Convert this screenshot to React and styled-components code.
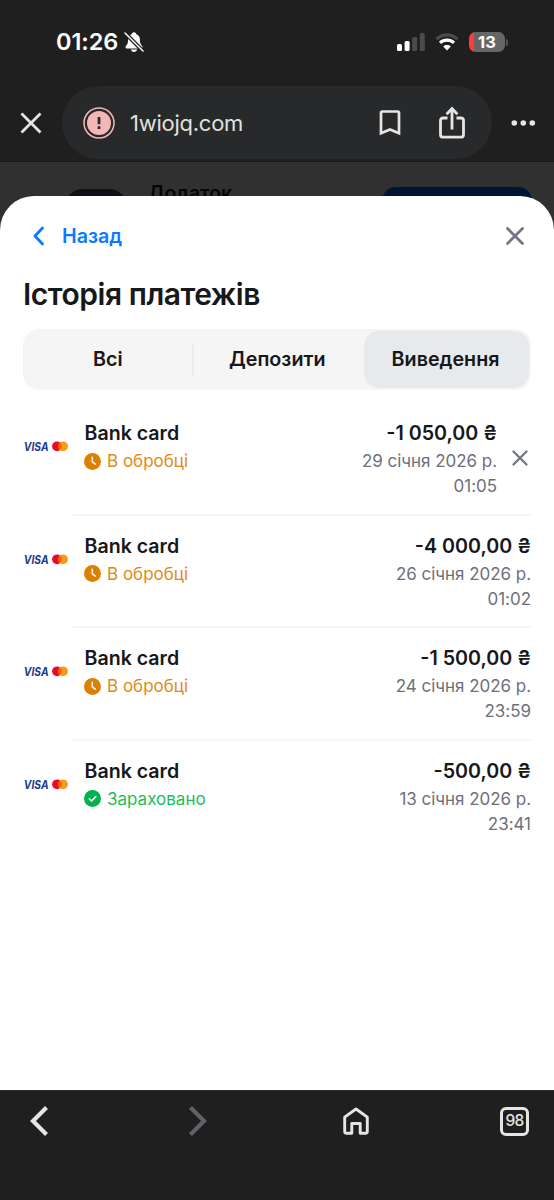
import React from "react";
import styled, { createGlobalStyle } from "styled-components";

const GlobalStyle = createGlobalStyle`
  * { box-sizing: border-box; }
  body { margin: 0; background: #1f1f1f; font-family: Inter, "Liberation Sans", sans-serif; }
  button { border: 0; padding: 0; margin: 0; background: none; font: inherit; color: inherit; }
  svg { display: block; flex: none; }
`;

const Phone = styled.div`
  width: 554px;
  height: 1200px;
  display: flex;
  flex-direction: column;
  background: #1f1f1f;
  overflow: hidden;
`;

const StatusBar = styled.header`
  height: 84px;
  padding: 0 46px 0 56px;
  display: flex;
  align-items: center;
  justify-content: space-between;
`;

const StatusSide = styled.div`
  display: flex;
  align-items: center;
  gap: ${(p) => p.$gap}px;
`;

const Clock = styled.span`
  width: 64px;
  font-size: 23.5px;
  line-height: 28px;
  font-weight: 600;
  letter-spacing: -0.1px;
  white-space: nowrap;
  color: #fff;
`;

const Battery = styled.div`
  display: flex;
  align-items: center;
  gap: 1px;
`;

const BatteryBody = styled.div`
  width: 36px;
  height: 20px;
  border-radius: 6.5px;
  background: linear-gradient(90deg, #ff3b3f 5px, #666 5px);
  color: #fff;
  font-size: 16.5px;
  line-height: 20px;
  font-weight: 700;
  text-align: center;
`;

const BatteryTip = styled.div`
  width: 2px;
  height: 7px;
  border-radius: 0 2px 2px 0;
  background: #555;
`;

const Toolbar = styled.div`
  height: 78px;
  padding: 2px 18px 2px 20px;
  display: flex;
  align-items: center;
  border-bottom: 1px solid #191919;
`;

const AddressBar = styled.div`
  width: 430px;
  height: 73px;
  margin: 0 19px 0 20px;
  padding: 0 27px 0 21px;
  border-radius: 37px;
  background: #28292a;
  display: flex;
  align-items: center;
`;

const Url = styled.span`
  flex: 1;
  margin-left: 15px;
  font-size: 22px;
  letter-spacing: -0.25px;
  line-height: 28px;
  color: #e0e1df;
`;

const ActionGroup = styled.div`
  display: flex;
  align-items: center;
  gap: 38px;
`;

const Viewport = styled.main`
  height: 928px;
  display: flex;
  flex-direction: column;
  background: #303030;
  overflow: hidden;
`;

const PagePeek = styled.div`
  height: 34px;
  padding: 0 22px 0 65px;
  display: flex;
  align-items: flex-start;
`;

const PeekIcon = styled.div`
  width: 62px;
  height: 60px;
  flex: none;
  margin-top: 27px;
  border-radius: 18px;
  background: #0d1018;
`;

const PeekTitle = styled.span`
  flex: 1;
  margin: 19px 0 0 21px;
  font-size: 19.5px;
  line-height: 24px;
  font-weight: 600;
  letter-spacing: -0.1px;
  color: #050505;
`;

const PeekButton = styled.div`
  width: 150px;
  height: 50px;
  margin-top: 25px;
  border-radius: 14px;
  background: #001533;
`;

const Sheet = styled.section`
  flex: 1;
  z-index: 1;
  padding: 22px 23px 0;
  border-radius: 34px 34px 0 0;
  background: #fff;
  color: #17181a;
`;

const SheetHeader = styled.div`
  height: 35px;
  padding: 0 7.5px 0 9px;
  display: flex;
  align-items: center;
  justify-content: space-between;
`;

const BackButton = styled.button`
  display: flex;
  align-items: center;
  gap: 16px;
  color: #0a7aff;
  font-size: 19.7px;
  line-height: 24px;
  font-weight: 600;
`;

const Title = styled.h1`
  margin: 21px 0 0;
  height: 40px;
  font-size: 30px;
  line-height: 40px;
  font-weight: 600;
  letter-spacing: -0.47px;
  white-space: nowrap;
`;

const Tabs = styled.div`
  height: 61px;
  margin-top: 15px;
  padding: 2px;
  display: flex;
  align-items: center;
  border-radius: 16px;
  background: #f5f5f5;
`;

const Tab = styled.button`
  flex: ${(p) => (p.$active ? "0 0 165px" : "1")};
  height: 57px;
  padding: 0 2px 1px 0;
  border-radius: 15px;
  font-size: 19.7px;
  font-weight: 600;
  background: ${(p) => (p.$active ? "#e8e9eb" : "transparent")};
`;

const TabDivider = styled.div`
  width: 2px;
  height: 34px;
  margin-left: -1px;
  margin-right: 1px;
  background: ${(p) => (p.$hidden ? "transparent" : "#ebecee")};
`;

const List = styled.ul`
  margin: 13px 0 0;
  padding: 0;
  list-style: none;
`;

const Row = styled.li`
  height: 112.67px;
  display: flex;
`;

const LogoCell = styled.div`
  width: 50px;
  padding-top: 33px;
`;

const RowBody = styled.div`
  flex: 1;
  padding: 17px 0 0 11px;
  display: flex;
  border-bottom: 2px solid ${(p) => (p.$last ? "transparent" : "#f5f5f6")};
`;

const Details = styled.div`
  flex: 1;
`;

const Method = styled.div`
  padding-left: 0.5px;
  font-size: 19.6px;
  line-height: 27px;
  font-weight: 600;
`;

const Status = styled.div`
  display: flex;
  align-items: center;
  gap: 6px;
  font-size: 17px;
  line-height: 28px;
  color: ${(p) => (p.$done ? "#1fbd59" : "#e08a14")};
`;

const Sum = styled.div`
  text-align: right;
  white-space: nowrap;
`;

const Amount = styled.div`
  font-size: 19.7px;
  line-height: 27px;
  font-weight: 600;
`;

const When = styled.div`
  padding-top: 2px;
  font-size: 17px;
  line-height: 25px;
  letter-spacing: -0.04px;
  color: #6d707a;
`;

const CancelButton = styled.button`
  width: 16px;
  height: 16px;
  margin: 30px 3px 0 15px;
`;

const BottomBar = styled.nav`
  height: 110px;
  padding: 14px 23px 0;
  display: flex;
  justify-content: space-between;
  align-items: flex-start;
  border-top: 1px solid #2c2e2d;
`;

const NavButton = styled.button`
  width: 32px;
  height: 32px;
  display: flex;
  align-items: center;
  justify-content: center;
`;

const TabCount = styled.span`
  width: 29px;
  height: 29px;
  border: 3px solid #e5e5e5;
  border-radius: 6px;
  font-size: 15.5px;
  line-height: 22.5px;
  font-weight: 500;
  letter-spacing: -0.8px;
  text-align: center;
  text-indent: -1px;
  color: #e5e5e5;
`;

const Cross = ({ size, color, stroke, cap = "round" }) => (
  <svg width={size} height={size} viewBox={`0 0 ${size} ${size}`} fill="none" stroke={color} strokeWidth={stroke} strokeLinecap={cap}>
    <path d={`M1.5 1.5 L${size - 1.5} ${size - 1.5} M${size - 1.5} 1.5 L1.5 ${size - 1.5}`} />
  </svg>
);

const MutedBell = () => (
  <svg width="20" height="22" viewBox="0 0 20 22">
    <path d="M10 1.2c1.2 0 2 .8 2.1 1.7 2.5.9 3.8 3 3.8 5.7 0 3.4.7 4.9 2.2 6.4.9.9.5 2.5-.9 2.5H2.8c-1.4 0-1.8-1.6-.9-2.5 1.5-1.5 2.2-3 2.2-6.4 0-2.7 1.3-4.8 3.8-5.7.1-.9.9-1.7 2.1-1.7Z" fill="#fff" />
    <path d="M6.8 18.5h6.4c-.4 1.5-1.6 2.4-3.2 2.4s-2.8-.9-3.2-2.4Z" fill="#fff" />
    <path d="M.5 1.5 19 20" stroke="#1f1f1f" strokeWidth="4" />
    <path d="M1 2 19 20" stroke="#fff" strokeWidth="1.5" strokeLinecap="round" />
  </svg>
);

const Signal = () => (
  <svg width="28" height="18" viewBox="0 0 28 18">
    <rect x="0" y="11" width="5" height="7" rx="1.5" fill="#fff" />
    <rect x="7.6" y="8" width="5" height="10" rx="1.5" fill="#fff" />
    <rect x="15.2" y="4" width="5" height="14" rx="1.5" fill="#4b4b4b" />
    <rect x="22.8" y="0" width="5" height="18" rx="1.5" fill="#4b4b4b" />
  </svg>
);

const Wifi = () => (
  <svg width="24" height="18" viewBox="0 0 24 18" fill="none">
    <path d="M1.5 6.2C7.5.5 16.5.5 22.5 6.2" stroke="#4b4b4b" strokeWidth="3.2" />
    <path d="M5 9.9c4-3.7 10-3.7 14 0" stroke="#fff" strokeWidth="3.2" />
    <path d="M12 17.5 8.2 13.5c2.2-1.9 5.4-1.9 7.600 0Z" fill="#fff" />
  </svg>
);

const Warning = () => (
  <svg width="32" height="32" viewBox="0 0 32 32">
    <circle cx="16" cy="16" r="15" fill="none" stroke="#f2b8b5" strokeWidth="1.5" />
    <circle cx="16" cy="16" r="12" fill="#f2b8b5" />
    <path d="M16 10v7.2M16 19.3v2.7" stroke="#28292a" strokeWidth="2.7" />
  </svg>
);

const Bookmark = () => (
  <svg width="22" height="26" viewBox="0 0 22 26" fill="none" stroke="#e5e5e5" strokeWidth="2.7" strokeLinejoin="miter">
    <path d="M2 23.3V2.8c0-.8.5-1.3 1.3-1.3h15.4c.8 0 1.3.5 1.3 1.3v20.5L11 19.5Z" />
  </svg>
);

const Share = () => (
  <svg width="26" height="33" viewBox="0 0 26 33" fill="none" stroke="#e5e5e5" strokeWidth="2.8">
    <path d="M8.5 12H4.3C2.600 12 1.5 12.900 1.5 14.5v14.2c0 1.6 1 2.5 2.8 2.5h17.4c1.8 0 2.800-.9 2.800-2.5V14.5c0-1.6-1.1-2.5-2.8-2.5h-4.2" />
    <path d="M13 23.5V3M7.6 8.2 13 2.5l5.4 5.7" />
  </svg>
);

const Dots = () => (
  <svg width="25" height="6" viewBox="0 0 25 6" fill="#e5e5e5">
    <circle cx="3.3" cy="3" r="2.8" />
    <circle cx="12.3" cy="3" r="2.8" />
    <circle cx="21.3" cy="3" r="2.8" />
  </svg>
);

const BackChevron = () => (
  <svg width="14" height="20" viewBox="0 0 14 20" fill="none" stroke="#0a7aff" strokeWidth="2.8" strokeLinecap="round" strokeLinejoin="round">
    <path d="M10.5 2 3 10l7.5 8" />
  </svg>
);

const CardBrands = () => (
  <svg width="46" height="20" viewBox="0 0 46 20">
    <text x="0.8" y="14.6" fontFamily="Inter, sans-serif" fontSize="11.6" fontWeight="700" fontStyle="italic" fill="#233a8e" textLength="24.8" lengthAdjust="spacingAndGlyphs">VISA</text>
    <circle cx="34" cy="10.3" r="4.9" fill="#eb0a25" />
    <circle cx="40" cy="10.3" r="4.9" fill="#f9991c" />
    <path d="M37 6.4a4.9 4.9 0 0 1 0 7.8 4.9 4.9 0 0 1 0-7.8Z" fill="#f5600b" />
  </svg>
);

const Pending = () => (
  <svg width="17" height="17" viewBox="0 0 17 17">
    <circle cx="8.5" cy="8.5" r="8.5" fill="#db8000" />
    <path d="M8.3 4.2v4.6l3 2.3" fill="none" stroke="#fff" strokeWidth="1.5" strokeLinecap="round" strokeLinejoin="round" />
  </svg>
);

const Done = () => (
  <svg width="17" height="17" viewBox="0 0 17 17">
    <circle cx="8.5" cy="8.5" r="8.5" fill="#00b34c" />
    <path d="m5.2 8.7 2.3 2.2 4.3-4.3" fill="none" stroke="#fff" strokeWidth="1.5" strokeLinecap="round" strokeLinejoin="round" />
  </svg>
);

const NavChevron = ({ forward }) => (
  <svg width="20" height="32" viewBox="0 0 20 32" fill="none" stroke={forward ? "#5f6368" : "#e5e5e5"} strokeWidth="4.2">
    <path d={forward ? "M2.500 2.500 16 16 2.500 29.500" : "M17.500 2.500 4 16l13.500 13.500"} />
  </svg>
);

const Home = () => (
  <svg width="26" height="28" viewBox="0 0 26 28" fill="none" stroke="#e5e5e5" strokeWidth="2.9" strokeLinejoin="round">
    <path d="M1.7 10.2 13 2l11.3 8.2v14.3c0 1-.7 1.7-1.7 1.7h-5.4V16.5H8.8v9.7H3.4c-1 0-1.7-.7-1.7-1.7Z" />
  </svg>
);

const payments = [
  { amount: "-1 050,00 ₴", date: "29 січня 2026 р.", time: "01:05", cancellable: true },
  { amount: "-4 000,00 ₴", date: "26 січня 2026 р.", time: "01:02" },
  { amount: "-1 500,00 ₴", date: "24 січня 2026 р.", time: "23:59" },
  { amount: "-500,00 ₴", date: "13 січня 2026 р.", time: "23:41", done: true },
];

const PaymentRow = ({ payment, last }) => (
  <Row>
    <LogoCell><CardBrands /></LogoCell>
    <RowBody $last={last}>
      <Details>
        <Method>Bank card</Method>
        <Status $done={payment.done}>
          {payment.done ? <Done /> : <Pending />}
          {payment.done ? "Зараховано" : "В обробці"}
        </Status>
      </Details>
      <Sum>
        <Amount>{payment.amount}</Amount>
        <When>
          {payment.date}
          <br />
          {payment.time}
        </When>
      </Sum>
      {payment.cancellable && (
        <CancelButton aria-label="Скасувати">
          <Cross size={16} color="#717682" stroke={2.3} />
        </CancelButton>
      )}
    </RowBody>
  </Row>
);

export default function App() {
  return (
    <Phone>
      <GlobalStyle />
      <StatusBar>
        <StatusSide $gap={4}>
          <Clock>01:26</Clock>
          <MutedBell />
        </StatusSide>
        <StatusSide $gap={10}>
          <Signal />
          <Wifi />
          <Battery>
            <BatteryBody>13</BatteryBody>
            <BatteryTip />
          </Battery>
        </StatusSide>
      </StatusBar>
      <Toolbar>
        <Cross size={22} color="#e5e5e5" stroke={2.8} cap="butt" />
        <AddressBar>
          <Warning />
          <Url>1wiojq.com</Url>
          <ActionGroup>
            <Bookmark />
            <Share />
          </ActionGroup>
        </AddressBar>
        <Dots />
      </Toolbar>
      <Viewport>
        <PagePeek>
          <PeekIcon />
          <PeekTitle>Додаток</PeekTitle>
          <PeekButton />
        </PagePeek>
        <Sheet>
          <SheetHeader>
            <BackButton>
              <BackChevron />
              Назад
            </BackButton>
            <Cross size={18} color="#717682" stroke={2.8} />
          </SheetHeader>
          <Title>Історія платежів</Title>
          <Tabs>
            <Tab>Всі</Tab>
            <TabDivider />
            <Tab>Депозити</Tab>
            <TabDivider $hidden />
            <Tab $active>Виведення</Tab>
          </Tabs>
          <List>
            {payments.map((payment, i) => (
              <PaymentRow key={payment.date} payment={payment} last={i === payments.length - 1} />
            ))}
          </List>
        </Sheet>
      </Viewport>
      <BottomBar>
        <NavButton><NavChevron /></NavButton>
        <NavButton><NavChevron forward /></NavButton>
        <NavButton><Home /></NavButton>
        <NavButton><TabCount>98</TabCount></NavButton>
      </BottomBar>
    </Phone>
  );
}
